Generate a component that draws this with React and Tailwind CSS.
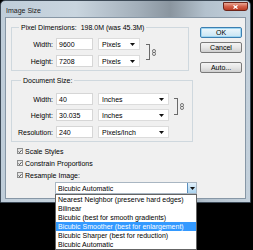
import React from 'react';

const Arrow = () => (
    <svg width="5" height="3" viewBox="0 0 5 3" className="shrink-0">
        <path d="M0 0H5L2.5 3Z" fill="#111" />
    </svg>
);

const Select = ({ value, className }) => (
    <div className={`flex h-[12px] items-center justify-between border border-[#dcdcdc] bg-white pl-[3px] pr-[4px] ${className}`}>
        <span>{value}</span>
        <Arrow />
    </div>
);

const Row = ({ label, value, unit, selClass }) => (
    <div className="flex h-[12px] items-center">
        <span className="w-[41px] text-right">{label}</span>
        <div className="ml-[3px] flex h-[12px] w-[37px] items-center border border-[#d6d6d6] bg-white pl-[2px]">{value}</div>
        <Select value={unit} className={`ml-[5px] ${selClass}`} />
    </div>
);

const Chain = () => (
    <svg width="4" height="7" viewBox="0 0 4 7">
        <rect x="0.5" y="0.5" width="3" height="3.2" rx="1.5" fill="none" stroke="#666" strokeWidth="0.9" />
        <rect x="0.5" y="3.3" width="3" height="3.2" rx="1.5" fill="none" stroke="#666" strokeWidth="0.9" />
    </svg>
);

const Link = ({ h, top, gap }) => (
    <div className={`flex items-center self-start ${top}`}>
        <div className={`w-[4px] border-y border-r border-[#6a6a6a] ${h}`}></div>
        <div className={`flex ${gap}`}><Chain /></div>
    </div>
);

const Check = ({ label }) => (
    <div className="flex h-[12px] items-center pl-[6px]">
        <div className="flex h-[6px] w-[6px] items-center justify-center border border-[#8e8f8f] bg-gradient-to-br from-[#dedede] to-white">
            <svg width="5" height="5" viewBox="0 0 5 5">
                <path d="M0.6 2.6L1.9 3.9L4.4 0.8" fill="none" stroke="#222" strokeWidth="1" />
            </svg>
        </div>
        <span className="ml-[2px]">{label}</span>
    </div>
);

const Button = ({ children, primary, className }) => (
    <button
        className={`flex h-[11px] w-[42px] items-center justify-center rounded-[2px] border leading-none ${
            primary
                ? 'border-[#3c7fb1] bg-gradient-to-b from-[#eef7fc] to-[#c7e4f3] shadow-[inset_0_0_0_1px_#9fd6f2]'
                : 'border-[#7a7a7a] bg-gradient-to-b from-[#f4f4f4] via-[#e6e6e6] to-[#cfcfcf]'
        } ${className}`}
    >
        {children}
    </button>
);

const methods = [
    'Nearest Neighbor (preserve hard edges)',
    'Bilinear',
    'Bicubic (best for smooth gradients)',
    'Bicubic Smoother (best for enlargement)',
    'Bicubic Sharper (best for reduction)',
    'Bicubic Automatic',
];

export default function App() {
    return (
        <div className="h-[250px] w-[253px] overflow-hidden bg-black font-['Liberation_Sans',Arial,sans-serif] text-[7px] leading-[9px] text-black">
            <div className="flex h-[203px] w-[251px] flex-col rounded-t-[5px] border border-[#3d4a57] bg-[linear-gradient(90deg,#bfcdd9_0%,#c9d5df_30%,#a3afba_55%,#8a959f_68%,#b3c1cd_82%,#c4d1dc_100%)] px-[4px] pb-[3px]">
                {/* Title bar */}
                <div className="flex h-[16px] items-start">
                    <span className="ml-[1px] mt-[5px] text-[#1b1b1b]">Image Size</span>
                    <div className="ml-auto mr-[-2px] mt-[1px] flex h-[9px] w-[25px] items-center justify-center rounded-b-[3px] border border-[#6d2419] bg-gradient-to-b from-[#e9a795] via-[#d2604a] to-[#b93a22]">
                        <svg width="5" height="4" viewBox="0 0 5 4">
                            <path d="M0.5 0.3L4.5 3.7M4.5 0.3L0.5 3.7" stroke="#fff" strokeWidth="1.2" />
                        </svg>
                    </div>
                </div>

                {/* Client area */}
                <div className="flex flex-1 border border-[#8797a6] bg-[#f0f0f0]">
                    <div className="flex w-[188px] flex-col pl-[5px] pt-[5px]">
                        <fieldset className="w-[178px] border border-[#cfd8de] px-0 pb-[3px] pt-[6px]">
                            <legend className="ml-[7px] px-[2px]">
                                Pixel Dimensions:<span className="ml-[4px]">198.0M (was 45.3M)</span>
                            </legend>
                            <div className="flex">
                                <div className="flex flex-col gap-[5px]">
                                    <Row label="Width:" value="9600" unit="Pixels" selClass="w-[42px]" />
                                    <Row label="Height:" value="7208" unit="Pixels" selClass="w-[42px]" />
                                </div>
                                <Link h="h-[16px]" top="mt-[6px] ml-[6px]" gap="ml-[2px]" />
                            </div>
                        </fieldset>

                        <fieldset className="mt-[5px] w-[182px] border border-[#cfd8de] px-0 pb-[3px] pt-[8px]">
                            <legend className="ml-[9px] px-[2px]">Document Size:</legend>
                            <div className="flex">
                                <div className="flex flex-col gap-[4px]">
                                    <Row label="Width:" value="40" unit="Inches" selClass="w-[71px]" />
                                    <Row label="Height:" value="30.035" unit="Inches" selClass="w-[71px]" />
                                    <div className="mt-[1px]">
                                        <Row label="Resolution:" value="240" unit="Pixels/Inch" selClass="w-[71px]" />
                                    </div>
                                </div>
                                <Link h="h-[17px]" top="mt-[5px] ml-[5px]" gap="ml-[2px]" />
                            </div>
                        </fieldset>

                        <div className="mt-[3px] flex flex-col">
                            <Check label="Scale Styles" />
                            <Check label="Constrain Proportions" />
                            <Check label="Resample Image:" />
                        </div>

                        <div className="relative z-10 ml-[44px] mt-[1px] flex h-[12px] w-[142px] items-center justify-between border border-[#a9b6c2] bg-white pl-[2px]">
                            <span>Bicubic Automatic</span>
                            <div className="flex h-full w-[9px] items-center justify-center border-l border-[#5a8fbf] bg-gradient-to-b from-[#e3f1fb] to-[#a9d3ef]">
                                <Arrow />
                            </div>
                            <div className="absolute left-[-1px] top-[11px] w-[142px] border border-[#646464] bg-white">
                                {methods.map((m, i) => (
                                    <div
                                        key={m}
                                        className={`h-[9px] whitespace-nowrap pl-[2px] ${i === 3 ? 'bg-[#3399ff] text-white' : ''}`}
                                    >
                                        {m}
                                    </div>
                                ))}
                            </div>
                        </div>
                    </div>

                    <div className="ml-[6px] flex flex-col pt-[9px]">
                        <Button primary>OK</Button>
                        <Button className="mt-[4px]">Cancel</Button>
                        <Button className="mt-[9px]">Auto...</Button>
                    </div>
                </div>
            </div>
        </div>
    );
}
